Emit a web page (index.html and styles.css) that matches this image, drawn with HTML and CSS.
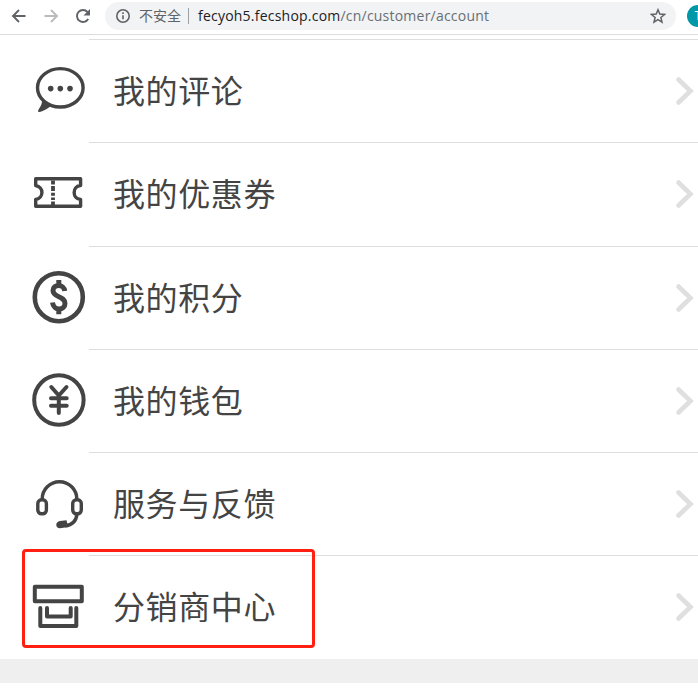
FILE: index.html
```html
<!DOCTYPE html>
<html lang="zh-CN">
<head>
<meta charset="utf-8">
<title>我的账户</title>
<link rel="stylesheet" href="styles.css">
</head>
<body>
<header class="toolbar">
  <svg class="nav" viewBox="0 0 16 16"><path d="M14.5 8H2.5M8 2L2 8l6 6"/></svg>
  <svg class="nav forward" viewBox="0 0 16 16"><path d="M1.5 8h12M8 2l6 6-6 6"/></svg>
  <svg class="nav reload" viewBox="0 0 16 16"><path d="M13.2 11A6 6 0 1 1 12.5 4"/><path class="solid" d="M15 1v6.5H8.500z"/></svg>
  <div class="address">
    <svg class="info" viewBox="0 0 16 16"><circle cx="8" cy="8" r="6.2"/><path d="M8 7.2v4M8 4.2v1.7"/></svg>
    <span class="insecure">不安全</span>
    <span class="divider"></span>
    <span class="url"><b>fecyoh5.fecshop.com</b>/cn/customer/account</span>
    <svg class="star" viewBox="0 0 16 16"><path d="M8 1.8l1.8 4.3 4.7.4-3.6 3 1.1 4.6L8 11.7l-4 2.4 1.1-4.6-3.6-3 4.7-.4z"/></svg>
  </div>
  <div class="avatar">T</div>
</header>
<main class="menu">
  <a class="row">
    <svg class="icon" viewBox="0 0 60 60"><ellipse cx="31.3" cy="26.8" rx="22.8" ry="19.2"/><path class="solid" d="M13 40C13 45 9 48 9 50.300c0 1 2.500 .5 4 0 4-1.500 7-4 10.500-6z"/><g class="solid"><circle cx="21.700" cy="27.600" r="2.800"/><circle cx="31.300" cy="27.600" r="2.800"/><circle cx="41" cy="27.600" r="2.800"/></g></svg>
    <span class="label">我的评论</span>
    <svg class="chevron" viewBox="0 0 20 32"><path d="M4.500 4.500L16.500 16l-12 11.500"/></svg>
  </a>
  <a class="row">
    <svg class="icon" viewBox="0 0 60 60"><path d="M6.700 14.700H51.600V21.500C43 22 43 35 51.600 35.500V42.300H6.700V35.500C15 34 15 23 6.700 21.500z"/><path class="perforation" d="M24 16.500v4M24 22v5M24 28.700v3M24 33.500v2.500M24 37.500v4"/></svg>
    <span class="label">我的优惠券</span>
    <svg class="chevron" viewBox="0 0 20 32"><path d="M4.500 4.500L16.500 16l-12 11.500"/></svg>
  </a>
  <a class="row">
    <svg class="icon bold" viewBox="0 0 60 60"><circle cx="29.800" cy="29.200" r="24"/><path class="dollar" d="M35.700 23C35 15.500 24 15.800 24 22.500c0 7.500 12 5 12 13 0 7.500-11.500 7.500-12.500-1M29.800 12v5M29.800 41v5.300"/></svg>
    <span class="label">我的积分</span>
    <svg class="chevron" viewBox="0 0 20 32"><path d="M4.500 4.500L16.500 16l-12 11.500"/></svg>
  </a>
  <a class="row">
    <svg class="icon medium" viewBox="0 0 60 60"><circle cx="29.900" cy="29" r="24.700"/><path class="round" d="M22.300 16l7.500 8.500 7.700-8.500M22 27.300h15.700M22 34.700h15.700M29.800 24.500v17.500"/></svg>
    <span class="label">我的钱包</span>
    <svg class="chevron" viewBox="0 0 20 32"><path d="M4.500 4.500L16.500 16l-12 11.500"/></svg>
  </a>
  <a class="row">
    <svg class="icon" viewBox="0 0 60 60"><path d="M13.200 25.500V25a17.300 17.300 0 0 1 34.600 0v.5M48 40C47.300 47 43 51 36 52"/><rect x="8.800" y="25.800" width="8.600" height="14" rx="3.700"/><rect x="43.700" y="25.800" width="8.600" height="14" rx="3.700"/><path class="solid" d="M31 47l6.500-.7 1.500 5.700-3 1.500-5 .8c-5 0-5-6.700 0-7.300z"/></svg>
    <span class="label">服务与反馈</span>
    <svg class="chevron" viewBox="0 0 20 32"><path d="M4.500 4.500L16.500 16l-12 11.500"/></svg>
  </a>
  <a class="row">
    <svg class="icon medium" viewBox="0 0 60 60"><rect x="5.800" y="9.800" width="47" height="14.400"/><path class="round" d="M11.300 31v18h36V31M18 31v8.500h23.700V31"/></svg>
    <span class="label">分销商中心</span>
    <svg class="chevron" viewBox="0 0 20 32"><path d="M4.500 4.500L16.500 16l-12 11.500"/></svg>
  </a>
</main>
<div class="gap"></div>
<div class="highlight"></div>
</body>
</html>
```

FILE: styles.css
```css
* { box-sizing: border-box; }
body {
  margin: 0;
  position: relative;
  height: 690px;
  overflow: hidden;
  background: #fff;
  color: #444;
  font-family: "Noto Sans CJK SC", sans-serif;
}
svg { display: block; flex: none; fill: none; stroke: currentColor; }
.solid { fill: currentColor; stroke: none; }

.toolbar {
  display: flex;
  align-items: center;
  height: 35px;
  padding: 0 0 3px 11px;
  border-bottom: 1px solid #dcdcdc;
  overflow: hidden;
}
.nav { width: 16px; height: 16px; margin-right: 16px; color: #5f6368; stroke-width: 1.9; }
.forward { color: #bbb; }
.reload { margin-right: 14px; }
.address {
  display: flex;
  align-items: center;
  flex: none;
  width: 571px;
  height: 28px;
  margin-top: 1px;
  padding: 0 10px;
  border-radius: 14px;
  background: #f1f3f4;
  color: #5f6368;
  font-size: 14px;
  white-space: nowrap;
}
.info { width: 16px; height: 16px; stroke-width: 1.6; }
.insecure { margin: 0 0 2px 8px; line-height: 20px; }
.divider { width: 1px; height: 16px; margin: 0 9px 0 7px; background: #9aa0a6; }
.url { font: 14px/20px "Open Sans", sans-serif; letter-spacing: 0.22px; color: #6a6e73; }
.url b { font-weight: 400; color: #202124; }
.star { width: 16px; height: 16px; margin-left: auto; stroke-width: 1.5; }
.avatar {
  flex: none;
  width: 22px;
  height: 22px;
  margin-left: 11px;
  border-radius: 50%;
  background: #0097a7;
  color: #fff;
  font: 12px/22px Roboto, sans-serif;
  text-align: center;
}

.menu {
  display: grid;
  grid-template-rows: 103px 104px 103px 103px 103px 104px;
  margin-top: 4px;
}
.row { position: relative; display: flex; align-items: flex-start; padding: 22px 4px 0 29px; }
.row::before {
  content: "";
  position: absolute;
  top: 0;
  left: 89px;
  right: 0;
  height: 1px;
  background: #dedede;
}
.icon { width: 60px; height: 60px; stroke-width: 3.4; stroke-linejoin: round; }
.medium { stroke-width: 4; }
.bold { stroke-width: 4.6; }
.dollar { stroke-width: 5; }
.round { stroke-linecap: round; }
.perforation { stroke-width: 3.8; }
.label {
  flex: 1;
  margin-left: 24px;
  font-size: 32px;
  line-height: 56px;
  letter-spacing: 0.6px;
}
.chevron {
  width: 20px;
  height: 32px;
  margin-top: 13.5px;
  color: #dfdfdf;
  stroke-width: 4.6;
  stroke-linecap: round;
}
.gap { height: 24px; background: #efefef; }
.highlight {
  position: absolute;
  left: 22px;
  top: 549px;
  width: 293px;
  height: 99px;
  border: 3px solid #ff2012;
  border-radius: 4px;
}
```
